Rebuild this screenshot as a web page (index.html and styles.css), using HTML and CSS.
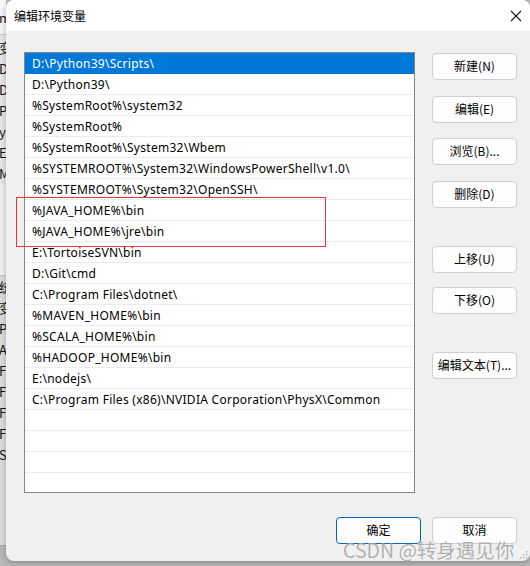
FILE: index.html
```html
<!DOCTYPE html>
<html lang="zh-CN">
<head>
<meta charset="utf-8">
<title>编辑环境变量</title>
<link rel="stylesheet" href="styles.css">
</head>
<body>
<div class="desk">
  <div class="bgwin">
    <div class="bg-top"><span>m</span></div>
    <div class="bg-list">
      <span>变</span><span>D</span><span>D</span><span>Pa</span><span>y</span><span>E</span><span>M</span>
    </div>
    <div class="bg-mid"></div>
    <div class="bg-list2">
      <span>统</span><span>变</span><span>Pa</span><span>A</span><span>F</span><span>F</span><span>F</span><span>F</span><span>S</span>
    </div>
  </div>
  <div class="dialog">
    <div class="titlebar">
      <span class="title">编辑环境变量</span>
      <svg class="close" width="12" height="12" viewBox="0 0 12 12"><path d="M1 1L11 11M11 1L1 11" stroke="#1a1a1a" stroke-width="1.1" fill="none"/></svg>
    </div>
    <div class="body">
      <div class="main">
        <ul class="list">
          <li class="sel">D:\Python39\Scripts\</li>
          <li>D:\Python39\</li>
          <li>%SystemRoot%\system32</li>
          <li>%SystemRoot%</li>
          <li>%SystemRoot%\System32\Wbem</li>
          <li>%SYSTEMROOT%\System32\WindowsPowerShell\v1.0\</li>
          <li>%SYSTEMROOT%\System32\OpenSSH\</li>
          <li>%JAVA_HOME%\bin</li>
          <li>%JAVA_HOME%\jre\bin</li>
          <li>E:\TortoiseSVN\bin</li>
          <li>D:\Git\cmd</li>
          <li>C:\Program Files\dotnet\</li>
          <li>%MAVEN_HOME%\bin</li>
          <li>%SCALA_HOME%\bin</li>
          <li>%HADOOP_HOME%\bin</li>
          <li>E:\nodejs\</li>
          <li>C:\Program Files (x86)\NVIDIA Corporation\PhysX\Common</li>
          <li></li>
          <li></li>
          <li></li>
          <li></li>
        </ul>
        <div class="side">
          <button class="btn">新建(N)</button>
          <button class="btn">编辑(E)</button>
          <button class="btn">浏览(B)...</button>
          <button class="btn">删除(D)</button>
          <button class="btn">上移(U)</button>
          <button class="btn">下移(O)</button>
          <button class="btn">编辑文本(T)...</button>
        </div>
      </div>
      <div class="footer">
        <button class="btn primary">确定</button>
        <button class="btn">取消</button>
      </div>
      <div class="mark"></div>
      <div class="watermark">CSDN @转身遇见你</div>
      <svg class="grip" width="8" height="8" viewBox="0 0 8 8"><g fill="#b0b0b0"><rect x="6" y="0" width="1.4" height="1.4"/><rect x="3" y="3" width="1.4" height="1.4"/><rect x="6" y="3" width="1.4" height="1.4"/><rect x="0" y="6" width="1.4" height="1.4"/><rect x="3" y="6" width="1.4" height="1.4"/><rect x="6" y="6" width="1.4" height="1.4"/></g></svg>
    </div>
  </div>
</div>
</body>
</html>
```
FILE: styles.css
```css
* { box-sizing: border-box; }
html, body {
  margin: 0;
  padding: 0;
}
body {
  width: 530px;
  height: 566px;
  overflow: hidden;
  background: #b9b9b9;
  font-family: "Noto Sans", "Noto Sans CJK SC", sans-serif;
  font-size: 12px;
  color: #000;
}
.desk {
  display: flex;
  width: 530px;
  height: 566px;
}
.bgwin {
  flex: none;
  width: 6px;
  height: 546px;
  background: #f3f3f3;
  overflow: hidden;
  display: flex;
  flex-direction: column;
  font-family: "Noto Sans CJK SC", sans-serif;
  font-size: 13px;
  border-bottom: 1px solid #a8a8a8;
}
.bgwin span {
  display: block;
  height: 21px;
  line-height: 21px;
  margin-left: -1px;
  white-space: nowrap;
  color: #111;
}
.bg-top {
  height: 35px;
  padding-top: 7px;
  border-bottom: 1px solid #cfcfcf;
  background: #f6f6f6;
}
.bg-list {
  padding-top: 2px;
  background: #e6e6e6;
}
.bg-mid {
  height: 92px;
  background: #f0f0f0;
  border-bottom: 1px solid #c6c6c6;
}
.bg-list2 {
  background: #dcdcdc;
  flex: 1;
}
.dialog {
  flex: none;
  width: 524px;
  height: 561px;
  background: #f0f0f0;
  border-radius: 8px;
  overflow: hidden;
  display: flex;
  flex-direction: column;
  box-shadow: 0 2px 6px rgba(0,0,0,0.25);
  position: relative;
}
.titlebar {
  flex: none;
  height: 31px;
  background: #ffffff;
  display: flex;
  align-items: center;
  justify-content: space-between;
  padding: 0 8px 0 8px;
}
.title {
  font-family: "Noto Sans CJK SC", sans-serif;
  font-size: 12px;
  color: #000;
}
.body {
  flex: 1;
  position: relative;
  padding: 21px 0 0 18px;
}
.main {
  display: flex;
  gap: 17px;
}
.list {
  list-style: none;
  margin: 0;
  padding: 0;
  width: 391px;
  height: 441px;
  background: #fff;
  border: 1px solid #828790;
  overflow: hidden;
}
.list li {
  height: 21px;
  line-height: 20px;
  padding: 1px 0 0 7px;
  border-bottom: 1px solid #ececec;
  white-space: nowrap;
  letter-spacing: 0.27px;
}
.list li.sel {
  background: #0078d7;
  color: #fff;
  border-bottom-color: #0078d7;
}
.side {
  display: flex;
  flex-direction: column;
  padding-top: 1px;
}
.btn {
  width: 85px;
  height: 27px;
  margin: 0;
  padding: 0 0 1px 0;
  background: #fdfdfd;
  border: 1px solid #d0d0d0;
  border-radius: 4px;
  font-family: "Noto Sans CJK SC", sans-serif;
  font-size: 12px;
  line-height: 16px;
  color: #000;
}
.side .btn:nth-child(2) { margin-top: 16px; }
.side .btn:nth-child(3) { margin-top: 15px; }
.side .btn:nth-child(4) { margin-top: 16px; }
.side .btn:nth-child(5) { margin-top: 38px; }
.side .btn:nth-child(6) { margin-top: 14px; }
.side .btn:nth-child(7) { margin-top: 38px; }
.footer {
  display: flex;
  justify-content: flex-end;
  gap: 11px;
  padding: 24px 13px 0 0;
}
.footer .btn { width: 85px; margin: 0; }
.btn.primary {
  border: 1.5px solid #0067c0;
}
.mark {
  position: absolute;
  left: 10px;
  top: 166px;
  width: 310px;
  height: 50px;
  border: 1px solid #e53935;
}
.watermark {
  position: absolute;
  left: 337px;
  top: 504px;
  font-family: "Noto Sans CJK SC", sans-serif;
  font-size: 19.5px;
  color: rgba(110,110,110,0.55);
  text-shadow: 0 0 1px rgba(255,255,255,0.8);
  white-space: nowrap;
}
.grip {
  position: absolute;
  right: 2px;
  bottom: 2px;
}
```
